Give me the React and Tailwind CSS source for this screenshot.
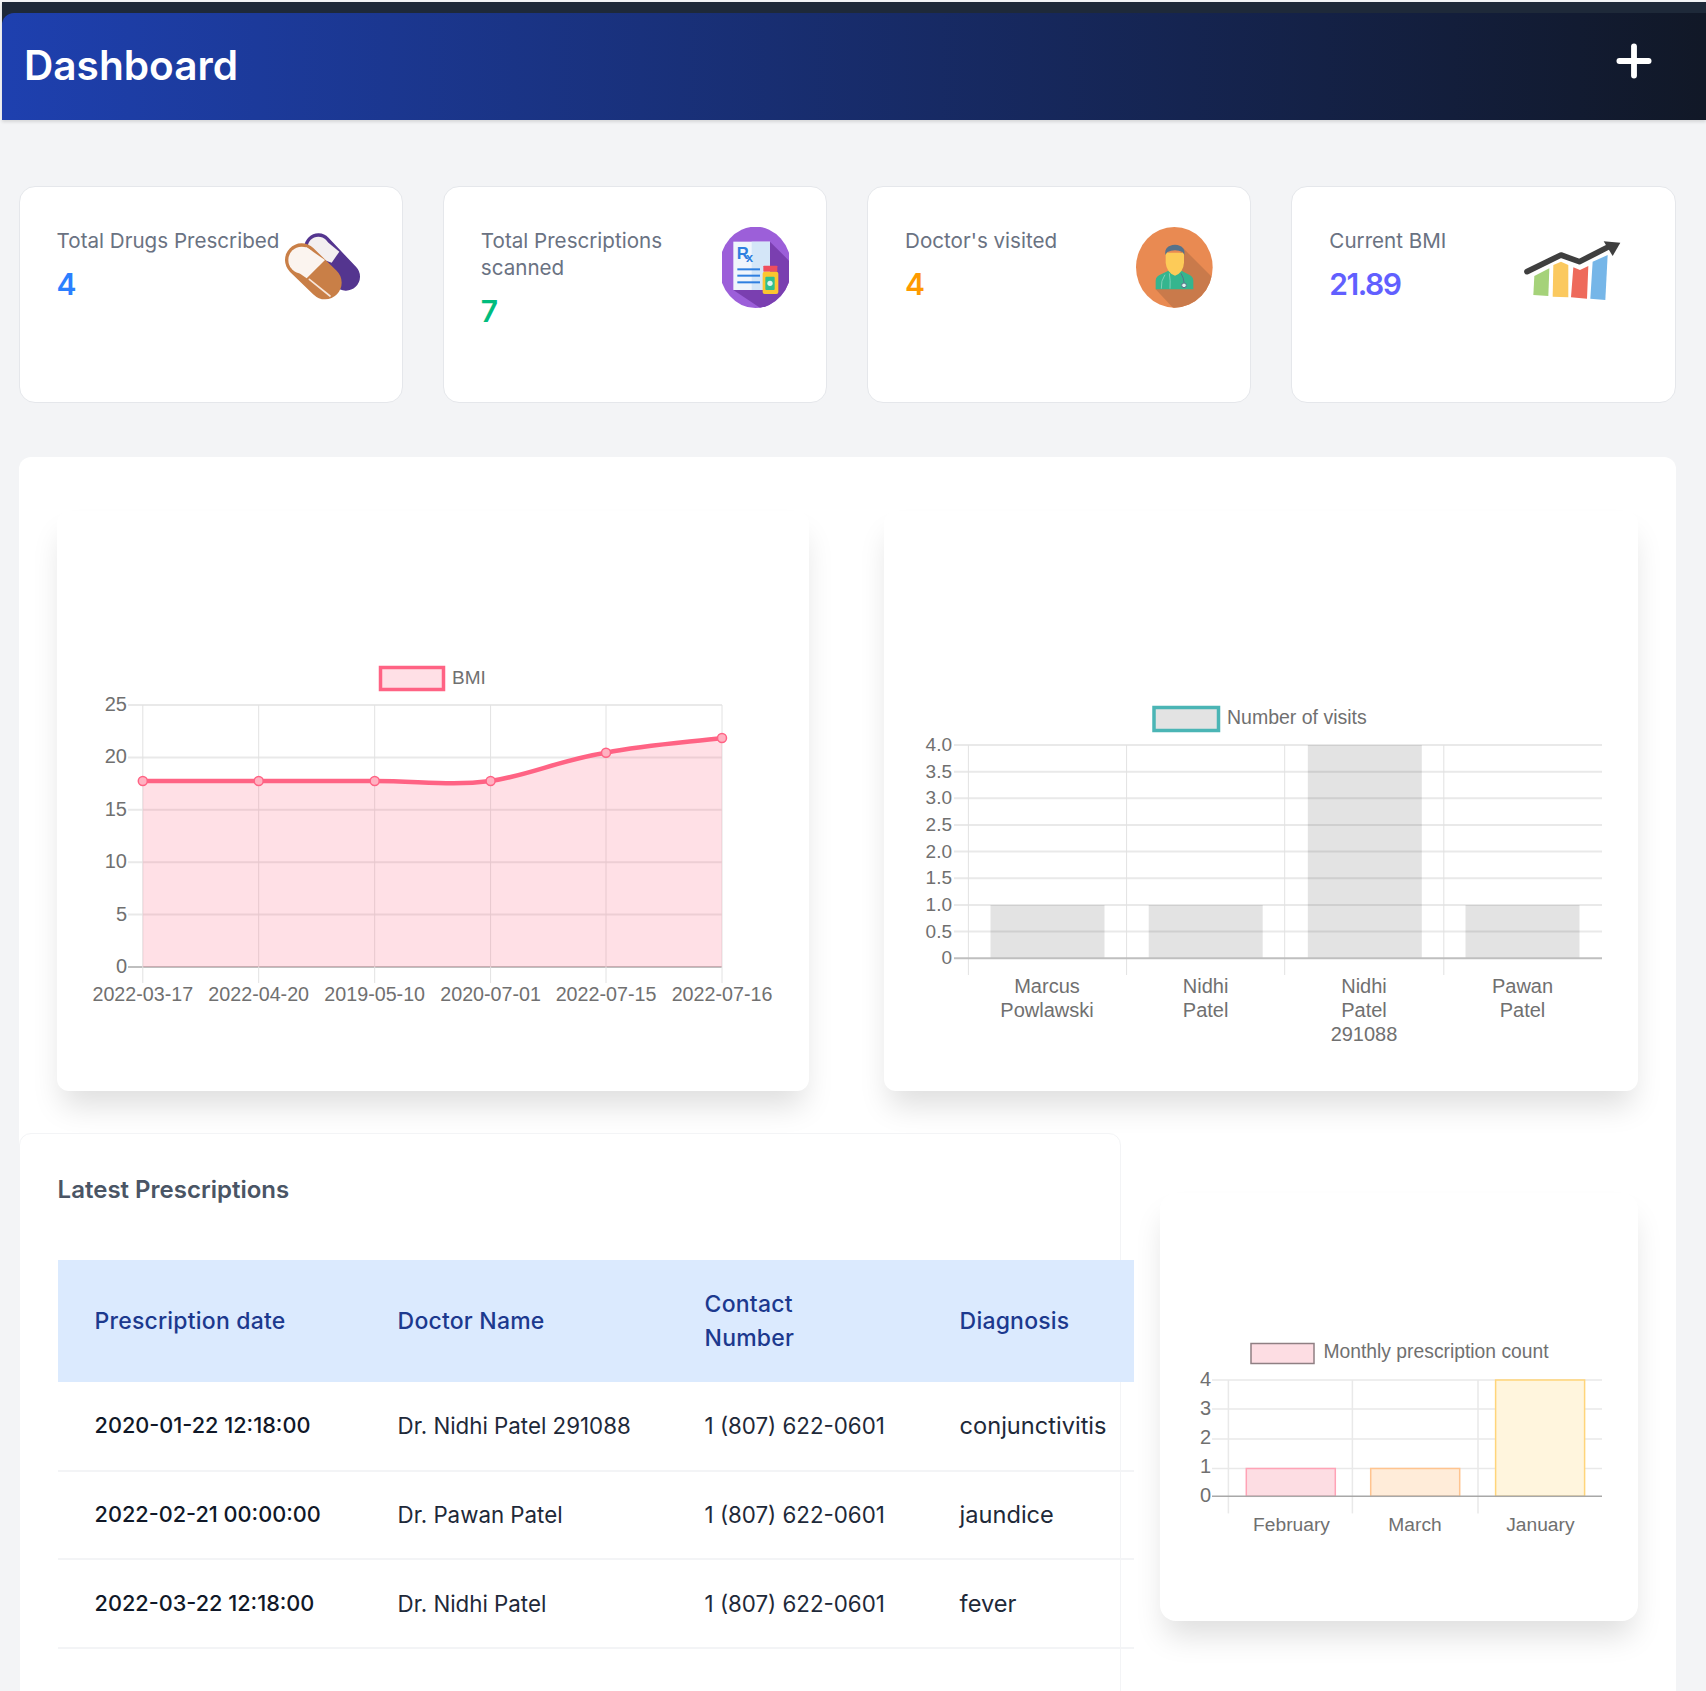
import { Plus } from "lucide-react";

const chartText = "fill-[#707070] text-[20px]";
const gridLine = "stroke-[#e9e9e9]";

/* stat card icons, drawn in the crop's own coordinates */
const PillIcon = () => (
  <svg viewBox="102 69 234 201" className="w-[78px] h-[67px] mt-[6px] mr-[3px] shrink-0">
    <line x1="205" y1="112" x2="288" y2="200" stroke="#54358f" strokeWidth="84" strokeLinecap="round" />
    <circle cx="205" cy="112" r="32" fill="#f3eff0" />
    <polygon points="182,90 228,92 268,125 245,158 190,138" fill="#f3eff0" />
    <line x1="155" y1="150" x2="225" y2="218" stroke="#c97f47" strokeWidth="100" strokeLinecap="round" />
    <circle cx="155" cy="150" r="40" fill="#fbf4ef" />
    <polygon points="127,122 170,112 225,150 170,205 120,170" fill="#fbf4ef" />
    <line x1="178" y1="208" x2="240" y2="258" stroke="#f7e6da" strokeWidth="5" strokeLinecap="round" />
  </svg>
);

const RxIcon = () => (
  <svg viewBox="66 51 201 243" className="w-[67px] h-[81px] shrink-0">
    <defs>
      <clipPath id="rx-clip">
        <ellipse cx="166" cy="172" rx="108" ry="122" />
      </clipPath>
    </defs>
    <ellipse cx="166" cy="172" rx="108" ry="122" fill="#9c5fd9" />
    <polygon points="210,95 300,185 300,300 190,300 100,240" fill="#7a3fb0" clipPath="url(#rx-clip)" />
    <rect x="100" y="95" width="110" height="145" fill="#f0f5fc" />
    <rect x="155" y="95" width="55" height="145" fill="#d4e6f8" />
    <text x="110" y="146" className="fill-[#2f7fe0] text-[50px] font-bold font-['Liberation_Sans',sans-serif]">
      R<tspan dy="10" dx="-8" className="text-[38px]">x</tspan>
    </text>
    <rect x="112" y="175" width="68" height="6" fill="#2f7fe0" />
    <rect x="112" y="194" width="68" height="6" fill="#2f7fe0" />
    <rect x="112" y="214" width="68" height="6" fill="#2f7fe0" />
    <rect x="190" y="167" width="42" height="18" rx="2" fill="#f04e5e" />
    <rect x="188" y="185" width="47" height="67" rx="6" fill="#fcc62f" />
    <rect x="196" y="200" width="28" height="40" rx="3" fill="#2fbf8f" />
    <circle cx="210" cy="220" r="8" fill="#dff5ee" />
  </svg>
);

const DoctorIcon = () => (
  <svg viewBox="48 51 231 243" className="w-[77px] h-[81px] shrink-0">
    <defs>
      <clipPath id="doc-clip">
        <ellipse cx="163" cy="172" rx="115" ry="121" />
      </clipPath>
    </defs>
    <ellipse cx="163" cy="172" rx="115" ry="121" fill="#e98a52" />
    <polygon points="190,115 290,215 290,300 165,300 107,238" fill="#c97a4b" clipPath="url(#doc-clip)" />
    <path d="M107 238 V212 Q107 198 125 192 L150 180 H180 L203 192 Q220 198 220 212 V238 Z" fill="#35b58e" />
    <path d="M137 128 H192 V158 Q190 188 165 197 Q140 188 137 158 Z" fill="#fdcb58" />
    <path d="M136 135 Q132 106 165 104 Q197 106 193 135 L188 126 Q165 116 142 126 Z" fill="#56728a" />
    <path d="M135 194 Q122 212 124 236 M148 190 Q152 212 150 236" stroke="#7fd0b8" strokeWidth="3" fill="none" />
    <path d="M183 190 Q192 205 192 218" stroke="#56728a" strokeWidth="3" fill="none" />
    <circle cx="192" cy="226" r="7" fill="#dff5ee" stroke="#56728a" strokeWidth="3" />
  </svg>
);

const TrendIcon = () => (
  <svg viewBox="39 60 291 180" className="w-[97px] h-[60px] mt-[13px] mr-[17px] shrink-0">
    <polygon points="70,168 115,145 112,228 67,225" fill="#a5d279" />
    <polygon points="127,135 150,125 172,135 172,232 125,230" fill="#fbc95f" />
    <polygon points="187,142 207,150 232,138 228,236 180,232" fill="#ee6a5b" />
    <polygon points="245,125 290,105 283,240 238,236" fill="#76b6e8" />
    <polyline points="48,155 150,105 205,125 290,82" fill="none" stroke="#3f3f3f" strokeWidth="17" strokeLinecap="round" strokeLinejoin="round" />
    <polygon points="278,64 328,68 305,108" fill="#3f3f3f" />
  </svg>
);

const StatCard = ({ label, value, valueClass, children }) => (
  <div className="h-[217px] bg-white rounded-2xl border border-gray-200 pl-[37px] pr-[37px] pt-[40px] flex items-start justify-between">
    <div>
      <p className="text-[20.6px] leading-[27px] text-gray-500">{label}</p>
      <p className={`text-[30px] leading-[30px] font-semibold tracking-[-1.5px] mt-[15px] ${valueClass}`}>{value}</p>
    </div>
    {children}
  </div>
);

const BmiChart = () => {
  const ys = [705, 757.4, 809.8, 862.2, 914.6];
  const ticks = ["25", "20", "15", "10", "5", "0"];
  const xs = [142.8, 258.7, 374.7, 490.6, 606, 722];
  const dates = ["2022-03-17", "2022-04-20", "2019-05-10", "2020-07-01", "2022-07-15", "2022-07-16"];
  const curve = "M142.8 781 L374.7 781 C420 781 450 786 490.6 781 C530 775 560 760 606 752.7 C645 745 690 742 722 738";
  const points = [781, 781, 781, 781, 752.7, 738];
  return (
    <svg viewBox="57 511 752 580" className="block w-[752px] h-[580px] font-['Liberation_Sans',sans-serif]">
      <rect x="380.5" y="667.5" width="63" height="22" fill="#ffe0e6" stroke="#ff6384" strokeWidth="3.5" />
      <text x="452" y="684" className="fill-[#707070] text-[19px]">BMI</text>
      {ys.map((y) => (
        <line key={y} x1="128" x2="722" y1={y} y2={y} strokeWidth="2" className={gridLine} />
      ))}
      <line x1="128" x2="722" y1="967" y2="967" strokeWidth="2" stroke="#bfbfbf" />
      {xs.map((x) => (
        <line key={x} x1={x} x2={x} y1="705" y2="983" className="stroke-[#e2e2e2]" />
      ))}
      <path d={`${curve} L722 967 L142.8 967 Z`} fill="#ff6384" fillOpacity="0.2" />
      <path d={curve} fill="none" stroke="#ff6384" strokeWidth="4.5" />
      {xs.map((x, i) => (
        <circle key={x} cx={x} cy={points[i]} r="4.5" fill="#ffb1c1" stroke="#ff6384" strokeWidth="1.5" />
      ))}
      {ticks.map((t, i) => (
        <text key={t} x="127" y={711 + i * 52.4} textAnchor="end" className={chartText}>{t}</text>
      ))}
      {dates.map((d, i) => (
        <text key={d} x={xs[i]} y="1001" textAnchor="middle" className="fill-[#707070] text-[19.7px]">{d}</text>
      ))}
    </svg>
  );
};

const VisitsChart = () => {
  const ticks = ["4.0", "3.5", "3.0", "2.5", "2.0", "1.5", "1.0", "0.5", "0"];
  const bars = [
    { x: 990.5, top: 905 },
    { x: 1148.7, top: 905 },
    { x: 1307.8, top: 745 },
    { x: 1465.5, top: 905 },
  ];
  const labels = [
    { x: 1047, lines: ["Marcus", "Powlawski"] },
    { x: 1205.6, lines: ["Nidhi", "Patel"] },
    { x: 1364, lines: ["Nidhi", "Patel", "291088"] },
    { x: 1522.5, lines: ["Pawan", "Patel"] },
  ];
  return (
    <svg viewBox="884 511 754 580" className="block w-[754px] h-[580px] font-['Liberation_Sans',sans-serif]">
      <rect x="1154" y="707.5" width="64.5" height="23" fill="#e3e3e3" stroke="#4bb5b5" strokeWidth="3.5" />
      <text x="1227" y="724" className="fill-[#707070] text-[19.5px]">Number of visits</text>
      {ticks.slice(0, 8).map((t, i) => (
        <line key={t} x1="954" x2="1602" y1={745 + i * 26.65} y2={745 + i * 26.65} strokeWidth="2" className={gridLine} />
      ))}
      {[968.4, 1126.6, 1284.7, 1443.8].map((x) => (
        <line key={x} x1={x} x2={x} y1="745" y2="975" className="stroke-[#e2e2e2]" />
      ))}
      {bars.map((b) => (
        <rect key={b.x} x={b.x} y={b.top} width="114" height={958.3 - b.top} fill="#000" fillOpacity="0.11" />
      ))}
      <line x1="954" x2="1602" y1="958.3" y2="958.3" strokeWidth="2" stroke="#bfbfbf" />
      {ticks.map((t, i) => (
        <text key={t} x="952" y={751 + i * 26.65} textAnchor="end" className="fill-[#707070] text-[19px]">{t}</text>
      ))}
      {labels.map((l) =>
        l.lines.map((line, i) => (
          <text key={l.x + line} x={l.x} y={993 + i * 24} textAnchor="middle" className={chartText}>{line}</text>
        ))
      )}
    </svg>
  );
};

const MonthlyChart = () => {
  const bars = [
    { x: 1246.3, top: 1468.5, fill: "#fddde3", stroke: "#ffa3b6" },
    { x: 1370.7, top: 1468.5, fill: "#ffecd9", stroke: "#ffc48f" },
    { x: 1495.6, top: 1380, fill: "#fff5dd", stroke: "#ffd57a" },
  ];
  return (
    <svg viewBox="1160 1193 478 428" className="block w-[478px] h-[428px] font-['Liberation_Sans',sans-serif]">
      <rect x="1251" y="1343.5" width="63" height="20" fill="#fddde3" stroke="#8f7f83" strokeWidth="1.5" />
      <text x="1323.5" y="1358" className="fill-[#707070] text-[19.3px]">Monthly prescription count</text>
      {[1380, 1409, 1439, 1468.5].map((y) => (
        <line key={y} x1="1212" x2="1602" y1={y} y2={y} strokeWidth="1.5" className={gridLine} />
      ))}
      {[1228.4, 1352.4, 1478].map((x) => (
        <line key={x} x1={x} x2={x} y1="1380" y2="1513.4" className="stroke-[#e9e9e9]" strokeWidth="1.5" />
      ))}
      {bars.map((b) => (
        <rect key={b.x} x={b.x} y={b.top} width="89" height={1496.3 - b.top} fill={b.fill} stroke={b.stroke} strokeWidth="1.5" />
      ))}
      <line x1="1212" x2="1602" y1="1496.3" y2="1496.3" strokeWidth="1.5" stroke="#a8a8a8" />
      {["4", "3", "2", "1", "0"].map((t, i) => (
        <text key={t} x="1211" y={1385.5 + i * 29.1} textAnchor="end" className={chartText}>{t}</text>
      ))}
      <text x="1291.5" y="1531" textAnchor="middle" className="fill-[#707070] text-[19.2px]">February</text>
      <text x="1415" y="1531" textAnchor="middle" className="fill-[#707070] text-[19.2px]">March</text>
      <text x="1540.4" y="1531" textAnchor="middle" className="fill-[#707070] text-[19.2px]">January</text>
    </svg>
  );
};

const rows = [
  { date: "2020-01-22 12:18:00", doctor: "Dr. Nidhi Patel 291088", diagnosis: "conjunctivitis" },
  { date: "2022-02-21 00:00:00", doctor: "Dr. Pawan Patel", diagnosis: "jaundice" },
  { date: "2022-03-22 12:18:00", doctor: "Dr. Nidhi Patel", diagnosis: "fever" },
];

export default function App() {
  return (
    <div className="h-[1691px] overflow-hidden bg-gray-100 pt-[2px] pl-[2px] font-['Inter',sans-serif]">
      {/* Top bar */}
      <div className="bg-gray-800 pt-[11px] shadow-[0_2px_3px_rgba(0,0,0,0.12)]">
        <header className="h-[107px] rounded-tl-xl bg-linear-to-r/srgb from-[#1e40af] to-[#111827] flex items-center justify-between pl-[22px] pr-[47px]">
          <h1 className="text-[40.6px] font-semibold text-white">Dashboard</h1>
          <Plus className="w-[50px] h-[50px] text-white mb-[12px]" strokeWidth={2.8} />
        </header>
      </div>

      {/* Stat cards */}
      <main className="mt-[66px] pl-[16.6px] pr-[30.4px]">
        <div className="grid grid-cols-4 gap-[40px]">
          <StatCard label="Total Drugs Prescribed" value="4" valueClass="text-blue-500">
            <PillIcon />
          </StatCard>
          <StatCard label={<>Total Prescriptions<br />scanned</>} value="7" valueClass="text-emerald-500">
            <RxIcon />
          </StatCard>
          <StatCard label="Doctor's visited" value="4" valueClass="text-amber-500">
            <DoctorIcon />
          </StatCard>
          <StatCard label="Current BMI" value="21.89" valueClass="text-indigo-500">
            <TrendIcon />
          </StatCard>
        </div>

        {/* Charts and table panel */}
        <section className="mt-[54px] w-[1657px] bg-white rounded-t-xl h-[1240px]">
          <div className="pt-[54px] pl-[38px] pr-[38px] grid grid-cols-[752px_754px] gap-[75px]">
            <div className="bg-white rounded-xl shadow-[0_20px_30px_-5px_rgba(0,0,0,0.13)]">
              <BmiChart />
            </div>
            <div className="bg-white rounded-xl shadow-[0_20px_30px_-5px_rgba(0,0,0,0.13)]">
              <VisitsChart />
            </div>
          </div>

          <div className="flex mt-[42px]">
            <div className="w-[1102px] h-[600px] bg-white rounded-t-xl border border-gray-100 pl-[38px] pt-[41px]">
              <h2 className="text-[24px] leading-[30px] font-semibold text-gray-600">Latest Prescriptions</h2>
              <table className="mt-[55px] w-[1076px] max-w-none table-fixed text-left">
                <colgroup>
                  <col className="w-[340px]" />
                  <col className="w-[307px]" />
                  <col className="w-[255px]" />
                  <col className="w-[174px]" />
                </colgroup>
                <thead className="bg-blue-100 text-blue-900 text-[23px] leading-[34px] tracking-[0.2px]">
                  <tr className="h-[122px]">
                    <th className="pl-[37px] font-medium">Prescription date</th>
                    <th className="font-medium">Doctor Name</th>
                    <th className="font-medium">Contact<br />Number</th>
                    <th className="font-medium">Diagnosis</th>
                  </tr>
                </thead>
                <tbody className="text-[22.3px] text-gray-800">
                  {rows.map((row) => (
                    <tr key={row.date} className="h-[88.5px] border-b-2 border-gray-100">
                      <td className="pl-[37px] text-[21.7px] font-medium text-gray-900">{row.date}</td>
                      <td>{row.doctor}</td>
                      <td>1 (807) 622-0601</td>
                      <td className="text-[23.6px]">{row.diagnosis}</td>
                    </tr>
                  ))}
                </tbody>
              </table>
            </div>

            <div className="ml-[39px] mt-[60px] w-[478px] h-[428px] bg-white rounded-2xl shadow-[0_20px_30px_-5px_rgba(0,0,0,0.13)]">
              <MonthlyChart />
            </div>
          </div>
        </section>
      </main>
    </div>
  );
}
